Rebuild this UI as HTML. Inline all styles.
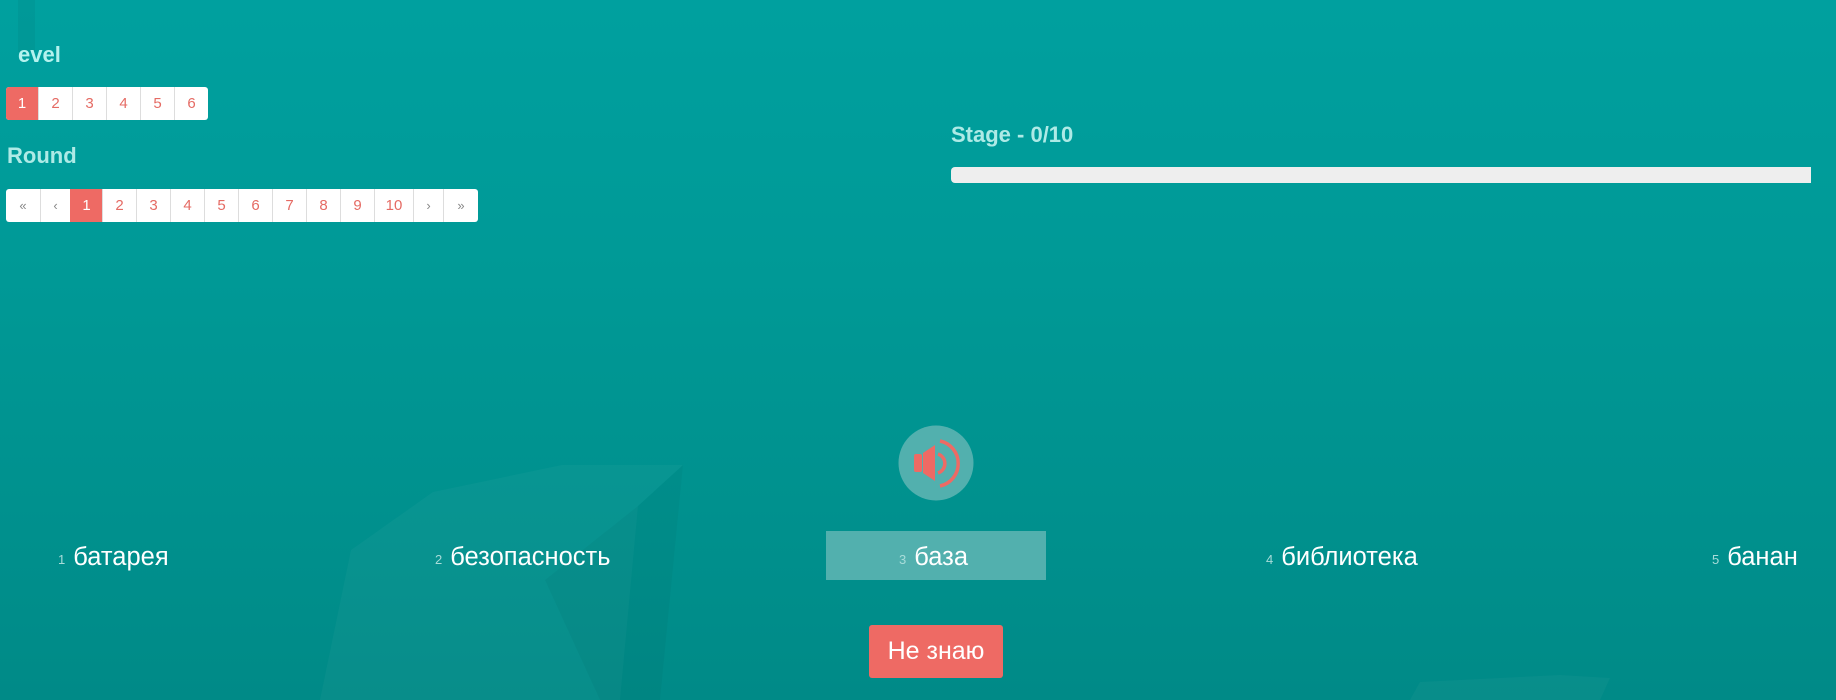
<!DOCTYPE html>
<html><head><meta charset="utf-8">
<style>
*{margin:0;padding:0;box-sizing:border-box}
html,body{width:1836px;height:700px;overflow:hidden}
body{background:linear-gradient(#00a09f 0%,#009996 40%,#008a87 100%);font-family:"Liberation Sans","DejaVu Sans",sans-serif;position:relative}
.lbl{position:absolute;color:#aeeae6;font-weight:bold;font-size:22px;font-family:"Liberation Sans",sans-serif}
.pg{position:absolute;display:flex;background:#fff;border-radius:3px;overflow:hidden;height:33px}
.pg span{display:flex;align-items:center;justify-content:center;height:33px;border-left:1px solid #ddd;color:#e56b64;font-size:15px;font-family:"Liberation Sans",sans-serif}
.pg span:first-child{border-left:none}
.pg span.a{background:#ee6a64;color:#fff;border-color:#ee6a64}
.pg span.g{color:#888;font-size:13px}
.w{position:absolute;top:540px;color:#fff;font-size:25.5px;white-space:nowrap;line-height:34px}
.w small{font-size:13px;color:#a8dcd9;margin-right:8px;vertical-align:1px}
</style></head><body>
<svg width="1836" height="700" style="position:absolute;left:0;top:0">
<polygon points="351,550 433,492 562,465 683,465 638,506 620,700 320,700" fill="#ffffff" opacity="0.03"/>
<polygon points="638,506 683,465 660,700 600,700 545,580" fill="#000" opacity="0.03"/>
<polygon points="1420,682 1560,675 1610,678 1600,700 1410,700" fill="#ffffff" opacity="0.03"/>
<rect x="18" y="0" width="17" height="52" fill="#000" opacity="0.04"/>
</svg>
<div class="lbl" style="left:18px;top:42px;color:#b4f2ee">evel</div>
<div class="pg" style="left:6px;top:87px">
<span class="a" style="width:32px">1</span><span style="width:34px">2</span><span style="width:34px">3</span><span style="width:34px">4</span><span style="width:34px">5</span><span style="width:34px">6</span>
</div>
<div class="lbl" style="left:7px;top:143px">Round</div>
<div class="pg" style="left:6px;top:189px">
<span class="g" style="width:34px">«</span><span class="g" style="width:30px">‹</span><span class="a" style="width:32px">1</span><span style="width:34px">2</span><span style="width:34px">3</span><span style="width:34px">4</span><span style="width:34px">5</span><span style="width:34px">6</span><span style="width:34px">7</span><span style="width:34px">8</span><span style="width:34px">9</span><span style="width:39px">10</span><span class="g" style="width:30px">›</span><span class="g" style="width:35px">»</span>
</div>
<div class="lbl" style="left:951px;top:122px">Stage - 0/10</div>
<div style="position:absolute;left:951px;top:167px;width:860px;height:16px;background:#eeeeee;border-radius:4px 0 0 4px"></div>
<svg width="80" height="80" style="position:absolute;left:896px;top:423px" viewBox="0 0 80 80">
<circle cx="40" cy="40" r="37.5" fill="#52b0ae"/>
<rect x="18" y="31" width="8" height="18" rx="2" fill="#ee6a64"/>
<polygon points="27,30 39,22 39,58 27,50" fill="#ee6a64"/>
<path d="M42,31 A10,10 0 0 1 42,50" fill="none" stroke="#ee6a64" stroke-width="3.5"/>
<path d="M44,18 A23,23 0 0 1 44,63" fill="none" stroke="#ee6a64" stroke-width="3.5"/>
</svg>
<div style="position:absolute;left:826px;top:531px;width:220px;height:49px;background:#52b0ae"></div>
<div class="w" style="left:58px"><small>1</small>батарея</div>
<div class="w" style="left:435px"><small>2</small>безопасность</div>
<div class="w" style="left:899px"><small>3</small>база</div>
<div class="w" style="left:1266px"><small>4</small>библиотека</div>
<div class="w" style="left:1712px"><small>5</small>банан</div>
<div style="position:absolute;left:869px;top:625px;width:134px;height:53px;background:#ee6a64;border-radius:3px;color:#fff;font-size:25px;display:flex;align-items:center;justify-content:center">Не знаю</div>
</body></html>
